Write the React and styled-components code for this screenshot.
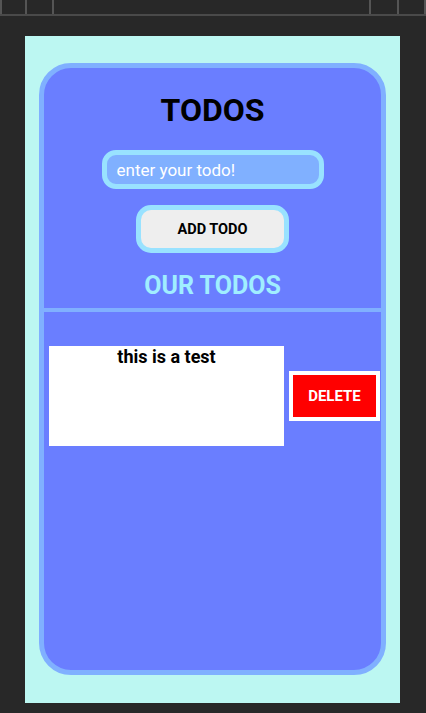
import React from 'react';
import styled, { createGlobalStyle } from 'styled-components';

const GlobalStyle = createGlobalStyle`
  body {
    margin: 0;
    background-color: #282828;
    font-family: Roboto, 'Liberation Sans', sans-serif;
  }
`;

const TopBar = styled.div`
  height: 14px;
  border-bottom: 2px solid #4a4a4a;
  display: flex;
  justify-content: space-between;
`;

const TabGroup = styled.div`
  display: flex;
`;

const Tab = styled.div`
  width: ${props => props.w}px;
  height: 14px;
  box-sizing: border-box;
  border-left: ${props => (props.left ? '2px solid #555' : 'none')};
  border-right: ${props => (props.right ? '2px solid #555' : 'none')};
`;

const Screen = styled.div`
  margin: 20px 0 0 25px;
  width: 375px;
  height: 667px;
  box-sizing: border-box;
  padding: 27px 14px 28px;
  background-color: #bcf7f2;
`;

const Card = styled.div`
  height: 612px;
  box-sizing: border-box;
  border: 5px solid #80b0ff;
  border-radius: 32px;
  background-color: #6a7eff;
  display: flex;
  flex-direction: column;
  align-items: center;
`;

const Title = styled.h1`
  margin: 23px 0 0;
  font-size: 32px;
  font-weight: 700;
  color: #000;
`;

const TodoInput = styled.input`
  margin-top: 21px;
  width: 222px;
  height: 39px;
  box-sizing: border-box;
  border: 5px solid #99e2ff;
  border-radius: 14px;
  background-color: #80b0ff;
  padding: 0 10px;
  font-family: Roboto, sans-serif;
  font-size: 17px;
  color: #fff;
  outline: none;

  &::placeholder {
    color: #fff;
  }
`;

const AddButton = styled.button`
  margin-top: 16px;
  width: 153px;
  height: 48px;
  box-sizing: border-box;
  border: 5px solid #99e2ff;
  border-radius: 15px;
  background-color: #eeeeee;
  font-family: Roboto, sans-serif;
  font-size: 14.5px;
  font-weight: 700;
  color: #000;
`;

const SubTitle = styled.h2`
  margin: 18px 0 0;
  font-size: 25px;
  font-weight: 700;
  color: #a0eeff;
`;

const Divider = styled.div`
  align-self: stretch;
  margin-top: 8px;
  height: 4px;
  background-color: #80b0ff;
`;

const List = styled.div`
  align-self: stretch;
  margin-top: 34px;
  padding: 0 1px 0 5px;
  display: flex;
  flex-direction: column;
`;

const TodoRow = styled.div`
  display: flex;
  align-items: center;
  justify-content: space-between;
`;

const TodoText = styled.div`
  width: 235px;
  height: 100px;
  background-color: #fff;
  text-align: center;
  font-size: 18px;
  font-weight: 700;
  color: #000;
`;

const DeleteButton = styled.button`
  width: 91px;
  height: 50px;
  box-sizing: border-box;
  border: 4px solid #fff;
  border-radius: 0;
  background-color: #ff0000;
  font-family: Roboto, sans-serif;
  font-size: 15px;
  font-weight: 700;
  color: #fff;
`;

const todos = ['this is a test'];

export default function App() {
  return (
    <>
      <GlobalStyle />
      <TopBar>
        <TabGroup>
          <Tab w={27} left right />
          <Tab w={27} right />
        </TabGroup>
        <TabGroup>
          <Tab w={30} left right />
          <Tab w={27} right />
        </TabGroup>
      </TopBar>
      <Screen>
        <Card>
          <Title>TODOS</Title>
          <TodoInput placeholder="enter your todo!" />
          <AddButton>ADD TODO</AddButton>
          <SubTitle>OUR TODOS</SubTitle>
          <Divider />
          <List>
            {todos.map(todo => (
              <TodoRow key={todo}>
                <TodoText>{todo}</TodoText>
                <DeleteButton>DELETE</DeleteButton>
              </TodoRow>
            ))}
          </List>
        </Card>
      </Screen>
    </>
  );
}
